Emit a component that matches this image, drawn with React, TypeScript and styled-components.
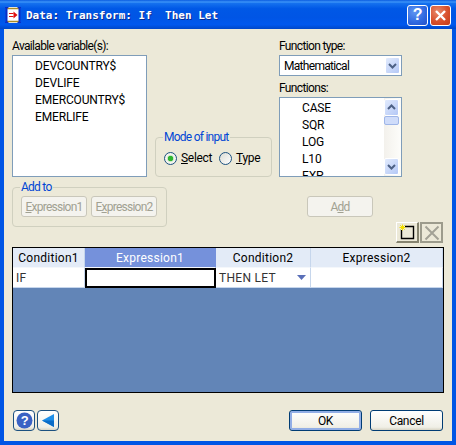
import * as React from "react";
import styled, { createGlobalStyle } from "styled-components";

const GlobalStyle = createGlobalStyle`
  html, body { margin: 0; padding: 0; background: #ece9d8; }
  body { font-family: Roboto, "Liberation Sans", Arial, sans-serif; font-size: 12px; letter-spacing: -0.3px; color: #000; }
`;

const Frame = styled.div`
  width: 456px;
  height: 445px;
  box-sizing: border-box;
  display: flex;
  flex-direction: column;
  overflow: hidden;
  background: #0055e5;
`;

const TitleBar = styled.div`
  height: 29px;
  flex: none;
  box-sizing: border-box;
  display: flex;
  align-items: center;
  padding: 1px 5px 0 5px;
  background: linear-gradient(180deg, #0a5ce0 0%, #3c94f8 7%, #1470ee 12%, #0058e6 30%, #0055e5 60%, #0058ee 85%, #0047c8 100%);
`;

const TitleText = styled.div`
  margin-left: 5px;
  font-family: "DejaVu Sans Mono", monospace;
  font-weight: bold;
  font-size: 11px;
  letter-spacing: 0;
  color: #fff;
  white-space: pre;
  text-shadow: 1px 1px 0 #0a2a90;
  flex: 1;
`;

const CaptionButton = styled.div<{ $red?: boolean }>`
  width: 21px;
  height: 21px;
  margin-left: 2px;
  box-sizing: border-box;
  border: 1px solid #fff;
  border-radius: 3px;
  display: flex;
  align-items: center;
  justify-content: center;
  background: ${(p) =>
    p.$red
      ? "radial-gradient(circle at 35% 30%, #e88a6c, #d8502c 55%, #c23a18)"
      : "radial-gradient(circle at 35% 30%, #5f96f2, #2f68e0 60%, #2450c8)"};
`;

const HelpMark = styled.span`
  color: #fff;
  font-family: "Liberation Sans", sans-serif;
  font-weight: bold;
  font-size: 16px;
`;

const Body = styled.div`
  flex: 1;
  margin: 0 4px 4px 4px;
  padding: 12px 8px 10px 8px;
  background: #ece9d8;
  display: flex;
  flex-direction: column;
  min-height: 0;
`;

const TopRow = styled.div`
  display: flex;
  align-items: flex-end;
`;

const Column = styled.div<{ $width: number; $left?: number }>`
  width: ${(p) => p.$width}px;
  margin-left: ${(p) => p.$left ?? 0}px;
  flex: none;
`;

const Label = styled.div`
  height: 14px;
  line-height: 11px;
  letter-spacing: -0.65px;
  white-space: nowrap;
`;

const ListBox = styled.div<{ $height: number; $indent: number }>`
  position: relative;
  height: ${(p) => p.$height}px;
  box-sizing: border-box;
  border: 1px solid #7f9db9;
  background: #fff;
  padding: 2px 0 0 ${(p) => p.$indent}px;
  overflow: hidden;
`;

const ListItem = styled.div`
  height: 17px;
  line-height: 17px;
  letter-spacing: -0.15px;
  white-space: nowrap;
`;

const GroupBox = styled.fieldset`
  margin: 0;
  min-width: 0;
  box-sizing: border-box;
  border: 1px solid #d0d0bf;
  border-radius: 4px;
`;

const Legend = styled.legend`
  padding: 0 1px;
  margin-left: -1px;
  color: #0046d5;
  letter-spacing: -0.75px;
  line-height: 2px;
`;

const ModeGroup = styled(GroupBox)`
  height: 41px;
  padding: 14px 0 0 8px;
  display: flex;
  align-items: flex-start;
`;

const RadioLabel = styled.div<{ $width: number }>`
  display: flex;
  align-items: center;
  width: ${(p) => p.$width}px;
  line-height: 13px;
`;

const RadioDot = styled.span<{ $checked?: boolean }>`
  width: 13px;
  height: 13px;
  box-sizing: border-box;
  margin-right: 4px;
  border: 1px solid #1c5180;
  border-radius: 50%;
  background: ${(p) =>
    p.$checked
      ? "radial-gradient(circle, #2fb52f 0 2.5px, #c8e8c8 3px, #f4f4ee 4px)"
      : "linear-gradient(135deg, #dcdcd4, #fff)"};
`;

const Combo = styled.div`
  height: 21px;
  box-sizing: border-box;
  margin-bottom: 7px;
  border: 1px solid #7f9db9;
  background: #fff;
  display: flex;
  align-items: center;
  justify-content: space-between;
  padding: 0 1px 0 4px;
  letter-spacing: -0.7px;
`;

const ScrollKnob = styled.div`
  width: 15px;
  height: 17px;
  box-sizing: border-box;
  flex: none;
  border: 1px solid #fff;
  border-radius: 2px;
  background: linear-gradient(135deg, #e2ebfd, #b4c8f6);
  display: flex;
  align-items: center;
  justify-content: center;
`;

const ScrollTrack = styled.div`
  position: absolute;
  top: 0;
  right: 0;
  bottom: 0;
  width: 17px;
  box-sizing: border-box;
  padding: 1px 2px 1px 0;
  display: flex;
  flex-direction: column;
  background: linear-gradient(90deg, #f3f1ec, #fdfdfa);
`;

const ScrollThumb = styled.div`
  height: 9px;
  box-sizing: border-box;
  margin-bottom: auto;
  border: 1px solid #9fb6e8;
  border-radius: 2px;
  background: #cfdcfa;
`;

const ActionRow = styled.div`
  display: flex;
  margin-top: 9px;
  height: 41px;
`;

const AddGroup = styled(GroupBox)`
  width: 155px;
  height: 41px;
  padding: 8px 0 0 8px;
  display: flex;
  gap: 4px;
`;

const PushButton = styled.div<{ $width: number }>`
  width: ${(p) => p.$width}px;
  height: 21px;
  box-sizing: border-box;
  display: flex;
  align-items: center;
  justify-content: center;
  border: 1px solid #c9c7ba;
  border-radius: 3px;
  background: #f4f3ee;
  color: #a1a192;
  letter-spacing: -0.75px;
  white-space: nowrap;
`;

const AddButton = styled(PushButton)`
  margin: 10px 0 0 140px;
`;

const Toolbar = styled.div`
  display: flex;
  justify-content: flex-end;
  margin: -5px 1px 5px 0;
  height: 20px;
`;

const ToolButton = styled.div<{ $off?: boolean }>`
  width: 23px;
  height: 21px;
  box-sizing: border-box;
  margin-left: 1px;
  border: 1px solid;
  border-width: ${(p) => (p.$off ? "2px" : "1px 2px 2px 1px")};
  border-color: ${(p) => (p.$off ? "#9c9b8c" : "#fff #85836f #85836f #fff")};
  background: #ece9d8;
  display: flex;
  align-items: center;
  justify-content: center;
`;

const Table = styled.div`
  width: 432px;
  height: 146px;
  box-sizing: border-box;
  border: 1px solid #000;
  background: #6285b7;
  flex: none;
`;

const TableRow = styled.div`
  display: grid;
  grid-template-columns: 72px 131px 95px 132px;
  height: 20px;
`;

const HeadCell = styled.div<{ $active?: boolean }>`
  box-sizing: border-box;
  display: flex;
  align-items: center;
  justify-content: center;
  background: ${(p) => (p.$active ? "#7591db" : "#e3ebf7")};
  color: ${(p) => (p.$active ? "#fff" : "#000")};
  border-right: 1px solid ${(p) => (p.$active ? "#7591db" : "#c6d6ec")};
  border-bottom: 1px solid #f4f7fb;
  letter-spacing: 0.25px;
`;

const Cell = styled.div<{ $current?: boolean }>`
  box-sizing: border-box;
  display: flex;
  align-items: center;
  justify-content: space-between;
  padding: 0 4px 0 3px;
  background: #fff;
  color: #333;
  letter-spacing: 0.3px;
  border: ${(p) => (p.$current ? "2px solid #000" : "none")};
  ${(p) => (p.$current ? "" : "border-right: 1px solid #c6d6ec; border-bottom: 1px solid #c6d6ec;")}
`;

const Footer = styled.div`
  display: flex;
  align-items: center;
  margin: 17px 1px 0 1px;
  height: 21px;
`;

const IconButton = styled.div`
  width: 22px;
  height: 21px;
  box-sizing: border-box;
  margin-right: 2px;
  border: 1px solid #1c5180;
  border-radius: 4px;
  background: linear-gradient(180deg, #fff, #f0efe6 85%, #d8d4c4);
  display: flex;
  align-items: center;
  justify-content: center;
`;

const DialogButton = styled.div<{ $default?: boolean; $left?: string }>`
  width: 73px;
  height: 21px;
  box-sizing: border-box;
  margin-left: ${(p) => p.$left ?? "8px"};
  display: flex;
  align-items: center;
  justify-content: center;
  border: 1px solid #003c74;
  border-radius: 3px;
  background: linear-gradient(180deg, #fff, #f0efe6 85%, #d8d4c4);
  box-shadow: ${(p) => (p.$default ? "inset 0 0 0 2px #92aee6" : "none")};
`;

const ChevronUp = () => (
  <svg width="9" height="7" viewBox="0 0 9 7">
    <path d="M1 5 L4.5 1.5 L8 5" fill="none" stroke="#4d6185" strokeWidth="2" />
  </svg>
);

const ChevronDown = () => (
  <svg width="9" height="7" viewBox="0 0 9 7">
    <path d="M1 2 L4.5 5.5 L8 2" fill="none" stroke="#4d6185" strokeWidth="2" />
  </svg>
);

const App: React.FC = () => (
  <>
    <GlobalStyle />
    <Frame>
      <TitleBar>
        <svg width="16" height="16" viewBox="0 0 16 16">
          <rect x="1" y="0" width="14" height="16" fill="#fff" />
          <path d="M2 1.5H14M2 14.5H14" stroke="#a88b2a" strokeWidth="1.5" />
          <path d="M1.5 0V16M14.5 0V16" stroke="#0a2ec8" strokeWidth="2" />
          <path d="M0 0.5H3.5M0 15.5H3.5M12.5 0.5H16M12.5 15.5H16" stroke="#0a2ec8" />
          <path d="M4 6.5H8.5M4 9.5H8.5" stroke="#e01010" />
          <path d="M8.5 4.5L12.5 8L8.5 11.5Z" fill="#e01010" />
        </svg>
        <TitleText>Data: Transform: If  Then Let</TitleText>
        <CaptionButton>
          <HelpMark>?</HelpMark>
        </CaptionButton>
        <CaptionButton $red>
          <svg width="13" height="13" viewBox="0 0 13 13">
            <path d="M2 2L11 11M11 2L2 11" stroke="#fff" strokeWidth="2.4" />
          </svg>
        </CaptionButton>
      </TitleBar>
      <Body>
        <TopRow>
          <Column $width={135}>
            <Label>Available variable(s):</Label>
            <ListBox $height={122} $indent={22}>
              <ListItem>DEVCOUNTRY$</ListItem>
              <ListItem>DEVLIFE</ListItem>
              <ListItem>EMERCOUNTRY$</ListItem>
              <ListItem>EMERLIFE</ListItem>
            </ListBox>
          </Column>
          <Column $width={117} $left={8}>
            <ModeGroup>
              <Legend>Mode of input</Legend>
              <RadioLabel $width={55}>
                <RadioDot $checked />
                <span>
                  <u>S</u>elect
                </span>
              </RadioLabel>
              <RadioLabel $width={45}>
                <RadioDot />
                <span>
                  <u>T</u>ype
                </span>
              </RadioLabel>
            </ModeGroup>
          </Column>
          <Column $width={123} $left={7}>
            <Label>Function type:</Label>
            <Combo>
              Mathematical
              <ScrollKnob>
                <ChevronDown />
              </ScrollKnob>
            </Combo>
            <Label>Functions:</Label>
            <ListBox $height={80} $indent={22}>
              <ListItem>CASE</ListItem>
              <ListItem>SQR</ListItem>
              <ListItem>LOG</ListItem>
              <ListItem>L10</ListItem>
              <ListItem>EXP</ListItem>
              <ScrollTrack>
                <ScrollKnob>
                  <ChevronUp />
                </ScrollKnob>
                <ScrollThumb />
                <ScrollKnob>
                  <ChevronDown />
                </ScrollKnob>
              </ScrollTrack>
            </ListBox>
          </Column>
        </TopRow>
        <ActionRow>
          <AddGroup>
            <Legend>Add to</Legend>
            <PushButton $width={66}>
              <span>
                <u>E</u>xpression1
              </span>
            </PushButton>
            <PushButton $width={66}>
              <span>
                E<u>x</u>pression2
              </span>
            </PushButton>
          </AddGroup>
          <AddButton $width={66}>
            <span>
              A<u>d</u>d
            </span>
          </AddButton>
        </ActionRow>
        <Toolbar>
          <ToolButton>
            <svg width="16" height="16" viewBox="0 0 16 16">
              <path d="M2.5 6V14.5H14.5V2.5H6" fill="none" stroke="#000" strokeWidth="1.4" />
              <path d="M3.5 0.5V6.5M0.5 3.5H6.5M1.2 1.2L5.8 5.8M5.8 1.2L1.2 5.8" stroke="#f4e000" />
            </svg>
          </ToolButton>
          <ToolButton $off>
            <svg width="16" height="16" viewBox="0 0 16 16">
              <path d="M1.5 1.5L14.5 14.5M14.5 1.5L1.5 14.5" stroke="#a3a296" strokeWidth="2" />
            </svg>
          </ToolButton>
        </Toolbar>
        <Table>
          <TableRow>
            <HeadCell>Condition1</HeadCell>
            <HeadCell $active>Expression1</HeadCell>
            <HeadCell>Condition2</HeadCell>
            <HeadCell>Expression2</HeadCell>
          </TableRow>
          <TableRow>
            <Cell>IF</Cell>
            <Cell $current />
            <Cell>
              THEN LET
              <svg width="9" height="5" viewBox="0 0 9 5">
                <path d="M0 0H9L4.5 5Z" fill="#5a6fb8" />
              </svg>
            </Cell>
            <Cell />
          </TableRow>
        </Table>
        <Footer>
          <IconButton>
            <svg width="17" height="17" viewBox="0 0 17 17">
              <circle cx="8.5" cy="8.5" r="8" fill="#3a62c4" />
              <text x="8.5" y="13" textAnchor="middle" fontSize="13" fontWeight="bold" fill="#fff" fontFamily="Liberation Sans">?</text>
            </svg>
          </IconButton>
          <IconButton>
            <svg width="14" height="15" viewBox="0 0 14 15">
              <path d="M1 7.5L13 1V14Z" fill="#1e8fe8" />
              <path d="M1 7.5L13 7.5V14Z" fill="#0a6cc8" />
            </svg>
          </IconButton>
          <DialogButton $default $left="auto">
            OK
          </DialogButton>
          <DialogButton>Cancel</DialogButton>
        </Footer>
      </Body>
    </Frame>
  </>
);

export default App;
